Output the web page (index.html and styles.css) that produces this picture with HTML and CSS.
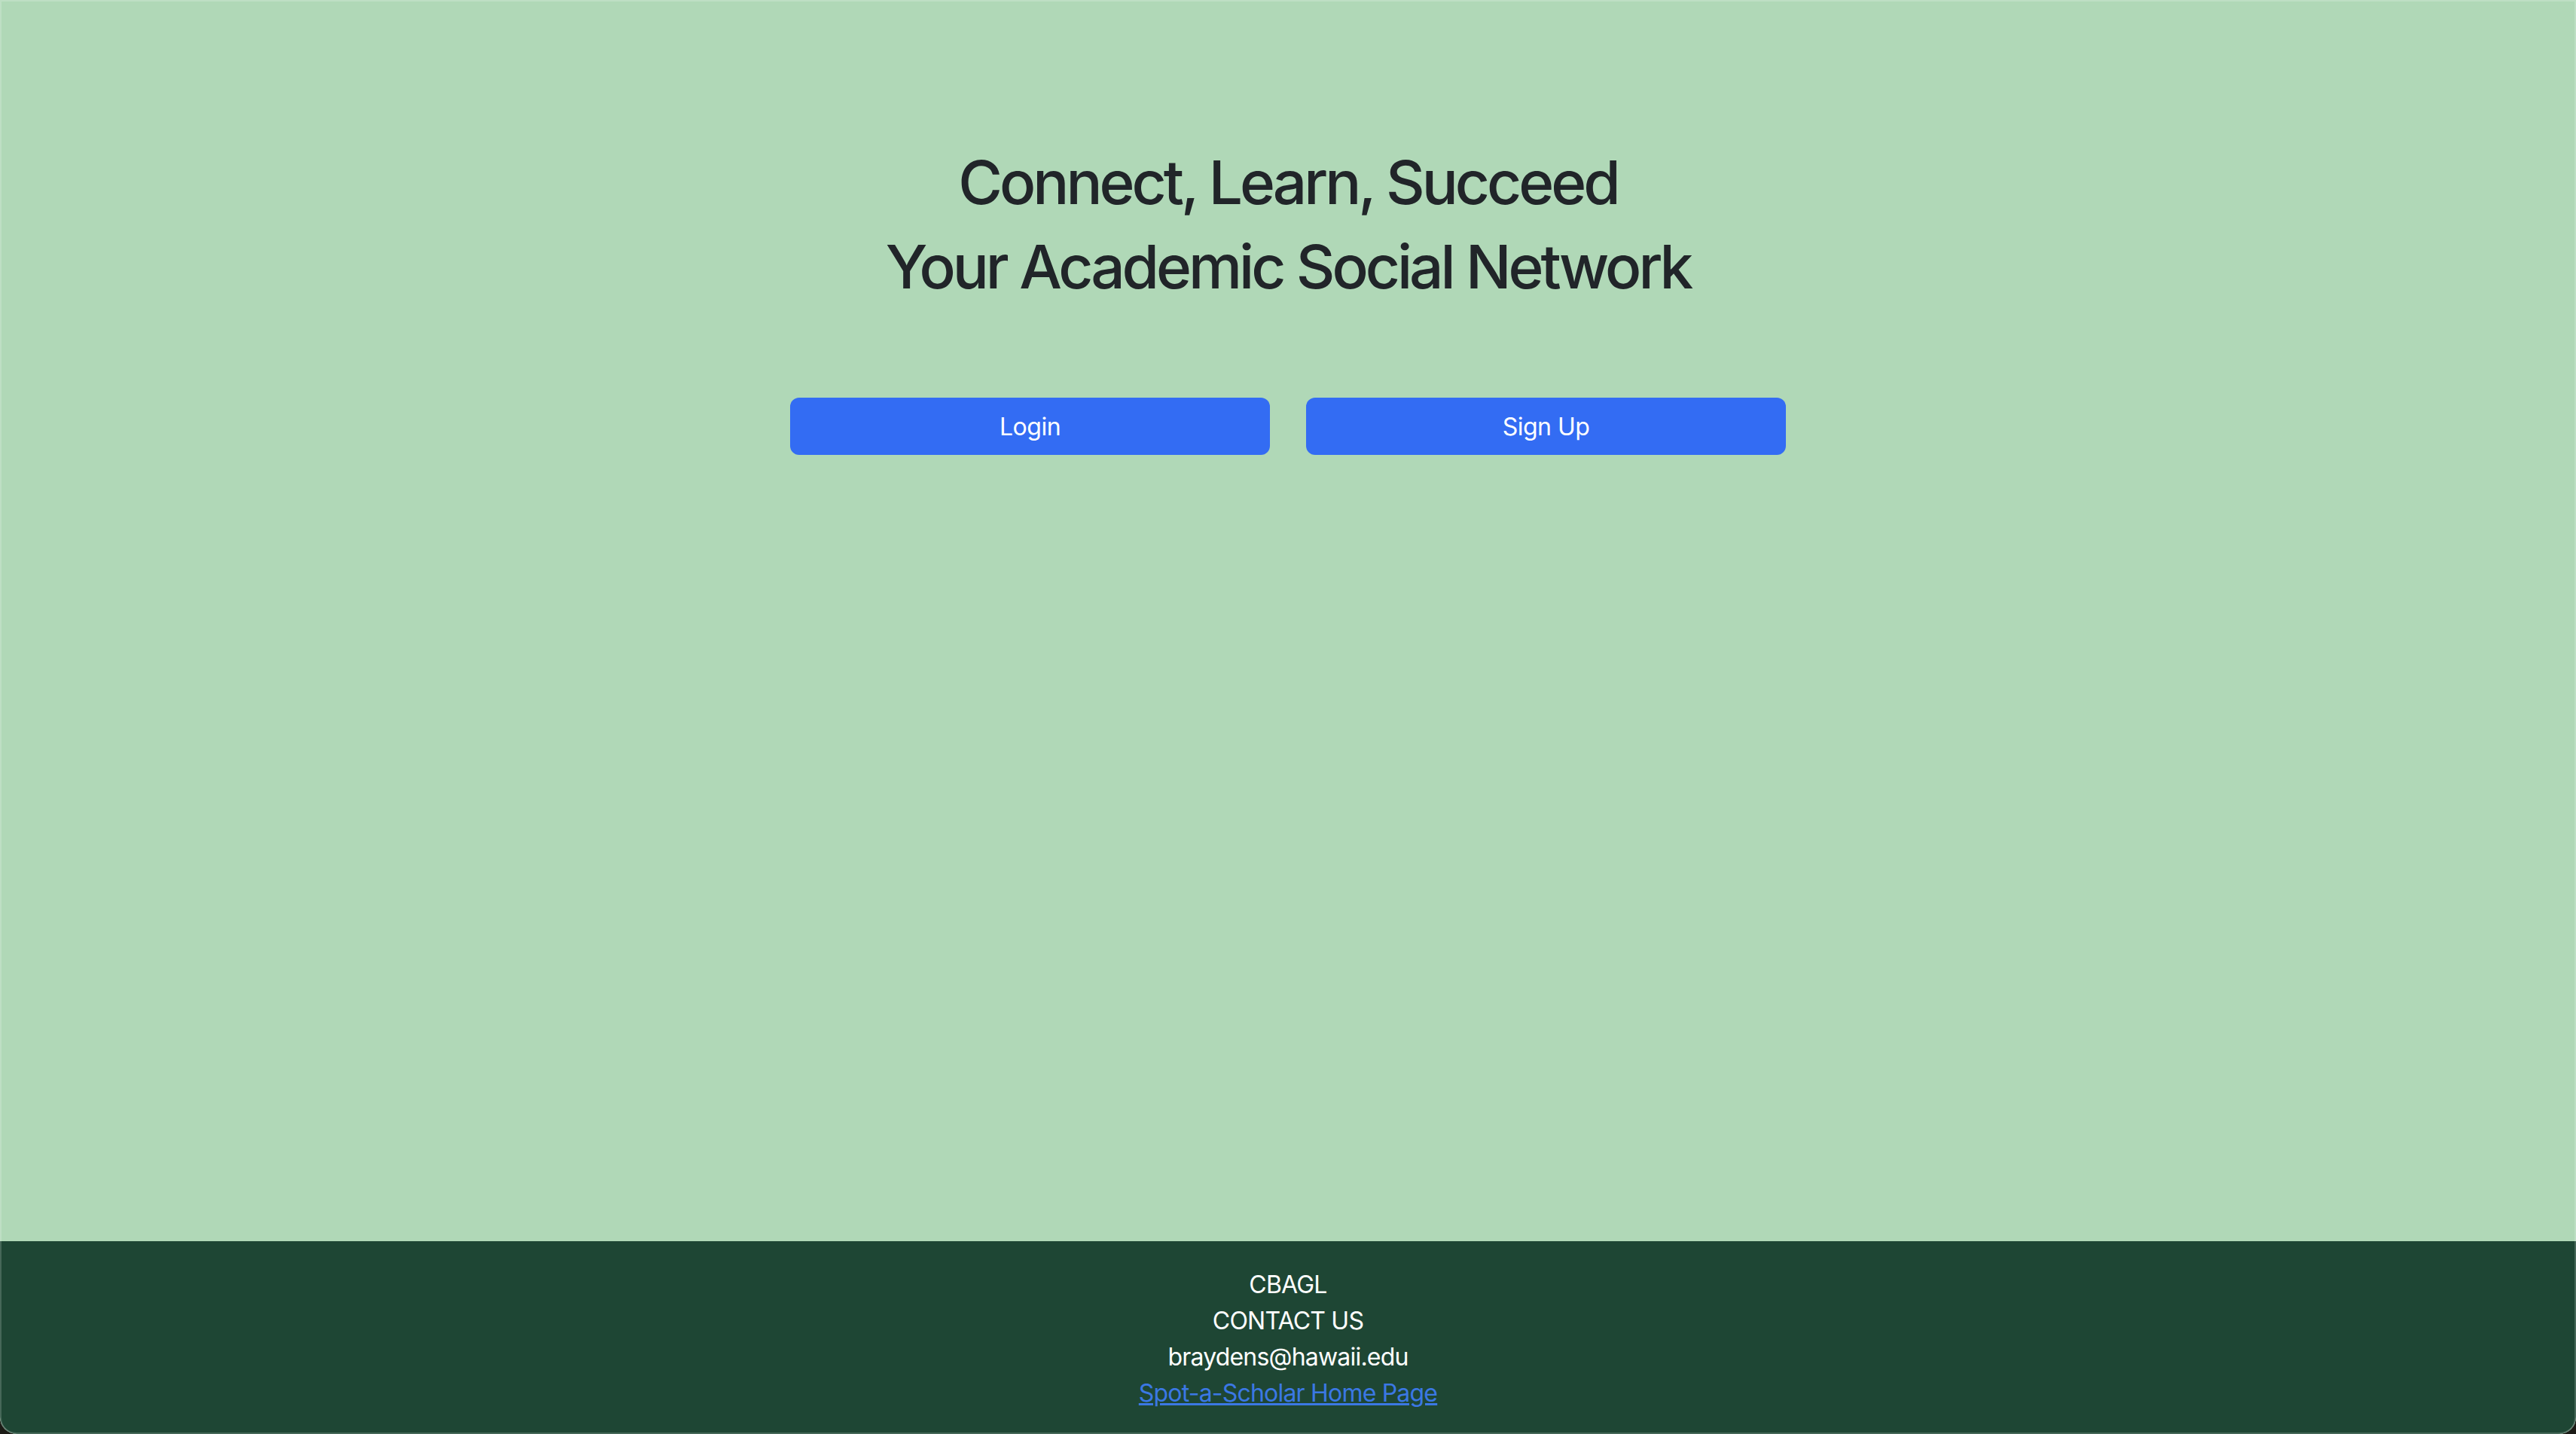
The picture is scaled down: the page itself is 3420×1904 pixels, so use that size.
FILE: index.html
```html
<!DOCTYPE html>
<html lang="en">
<head>
<meta charset="utf-8">
<title>Spot-a-Scholar</title>
<link rel="stylesheet" href="styles.css">
</head>
<body>
<div class="window">
  <main class="landing">
    <h1 class="title">Connect, Learn, Succeed</h1>
    <h1 class="title">Your Academic Social Network</h1>
    <div class="actions">
      <a class="btn" href="#">Login</a>
      <a class="btn" href="#">Sign Up</a>
    </div>
  </main>
  <footer class="footer">
    <div class="footer-line">CBAGL</div>
    <div class="footer-line">CONTACT US</div>
    <div class="footer-line">braydens@hawaii.edu</div>
    <div class="footer-line"><a class="footer-link" href="#">Spot-a-Scholar Home Page</a></div>
  </footer>
</div>
</body>
</html>
```
FILE: styles.css
```css
html, body {
  margin: 0;
  padding: 0;
  height: 100%;
}
body {
  background: #1c1b16;
  font-family: Inter, "Liberation Sans", sans-serif;
  color: #212529;
}
.window {
  box-sizing: border-box;
  height: 1904px;
  display: flex;
  flex-direction: column;
  background: #b0d8b7;
  border-radius: 0 0 22px 22px;
  overflow: hidden;
  box-shadow: inset 0 0 0 2px rgba(255, 255, 255, 0.18);
}
.landing {
  flex: 1;
  display: flex;
  flex-direction: column;
  align-items: center;
  padding-top: 194px;
}
.title {
  margin: 0 0 16px;
  font-size: 80px;
  line-height: 96px;
  font-weight: 500;
  letter-spacing: -4px;
  color: #212529;
  text-align: center;
}
.actions {
  margin-top: 110px;
  display: flex;
  gap: 48px;
}
.btn {
  box-sizing: border-box;
  width: 637px;
  height: 76px;
  display: flex;
  align-items: center;
  justify-content: center;
  background: #336cf3;
  color: #ffffff;
  font-size: 32px;
  letter-spacing: -0.5px;
  text-decoration: none;
  border-radius: 12px;
}
.footer {
  background: #1e4634;
  color: #ffffff;
  padding: 34px 0 30px;
  text-align: center;
  font-size: 32px;
  line-height: 48px;
  letter-spacing: -0.8px;
  box-shadow: inset 2px 0 0 rgba(255,255,255,0.18), inset -2px 0 0 rgba(255,255,255,0.18), inset 0 -2px 0 rgba(255,255,255,0.18);
  border-radius: 0 0 22px 22px;
}
.footer-link {
  color: #3b78e4;
}
```
